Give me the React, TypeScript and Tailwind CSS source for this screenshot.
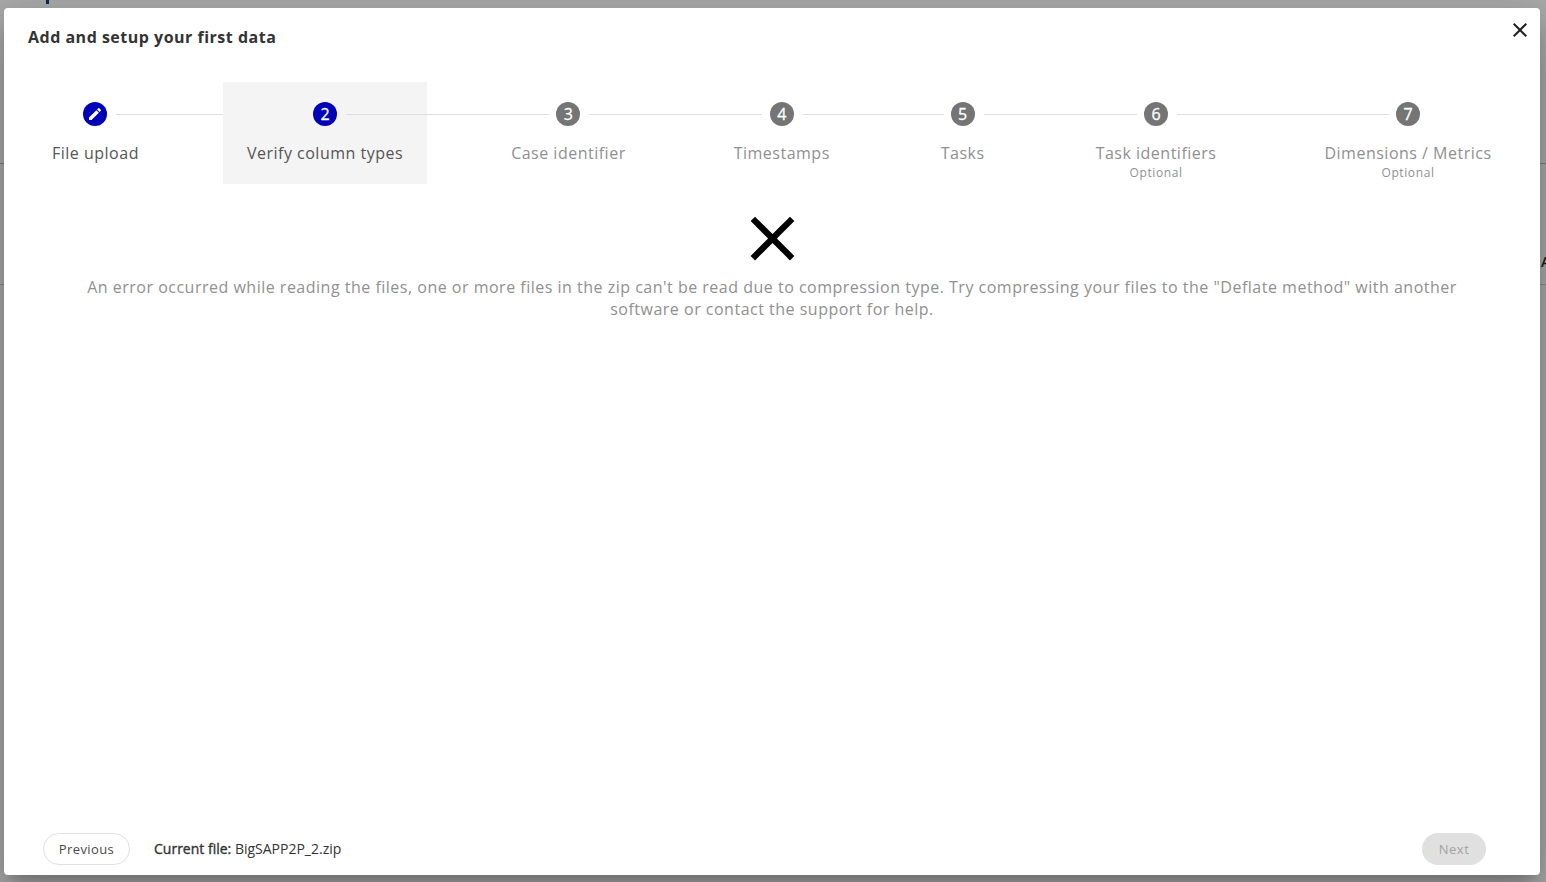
import React from 'react';

const steps = [
  { label: 'File upload', connector: 'w-[190px]', icon: 'edit', gap: '' },
  { label: 'Verify column types', connector: 'w-[203px]', num: 2, active: true, gap: 'ml-[60px]' },
  { label: 'Case identifier', connector: 'w-[173px]', num: 3, gap: 'ml-[60px]' },
  { label: 'Timestamps', connector: 'w-[141px]', num: 4, gap: 'ml-[60px]' },
  { label: 'Tasks', connector: 'w-[153px]', num: 5, gap: 'ml-[63px]' },
  { label: 'Task identifiers', connector: 'w-[212px]', num: 6, optional: true, gap: 'ml-[63px]' },
  { label: 'Dimensions / Metrics', num: 7, optional: true, gap: 'ml-[60px]' },
];

const CloseIcon: React.FC<{ className: string }> = ({ className }) => (
  <svg className={className} viewBox="0 0 24 24" fill="currentColor">
    <path d="M19 6.41L17.59 5 12 10.59 6.41 5 5 6.41 10.59 12 5 17.59 6.41 19 12 13.41 17.59 19 19 17.59 13.41 12z" />
  </svg>
);

const Step: React.FC<{ s: typeof steps[0] }> = ({ s }) => {
  const done = s.icon === 'edit';
  const current = done || s.active;
  return (
    <div className={`relative h-[102px] px-6 pt-5 flex flex-col items-center ${s.gap} ${s.active ? 'bg-[#f4f4f4]' : ''}`}>
      {/* Circle */}
      <div className={`relative z-10 w-6 h-6 rounded-full flex items-center justify-center text-white text-base [-webkit-text-stroke:0.3px_#ffffff] ${current ? 'bg-[#0000b8]' : 'bg-[#757575]'}`}>
        {done ? (
          <svg className="w-4 h-4" viewBox="0 0 24 24" fill="currentColor">
            <path d="M3 17.25V21h3.75L17.81 9.94l-3.75-3.75L3 17.25zM20.71 7.04c.39-.39.39-1.02 0-1.41l-2.34-2.34c-.39-.39-1.02-.39-1.41 0l-1.83 1.83 3.75 3.75 1.83-1.83z" />
          </svg>
        ) : (
          s.num
        )}
      </div>

      {/* Connector to next step */}
      {s.connector && (
        <div className={`absolute top-8 left-[calc(50%+21px)] h-px bg-[#dedede] ${s.connector}`} />
      )}

      <p className={`mt-[15px] text-base leading-[24px] tracking-[0.5px] whitespace-nowrap ${current ? 'text-[#555555]' : 'text-[#909090]'}`}>
        {s.label}
      </p>
      {s.optional && (
        <p className="text-xs leading-[16px] tracking-[0.6px] text-[#909090]">Optional</p>
      )}
    </div>
  );
};

export default function App() {
  return (
    <div className="relative h-[882px] w-full overflow-hidden bg-[#aaaaaa] pt-2 pl-1 pr-1.5 pb-[7px] font-['Open_Sans',sans-serif]">
      {/* Page behind the backdrop */}
      <div className="absolute left-[46px] top-0 w-[3px] h-1 bg-[#0a2a55]" />
      <div className="absolute left-0 right-0 top-[163px] h-px bg-[#7c7c7c]" />
      <div className="absolute left-0 right-0 top-[284px] h-px bg-[#8a8a8a]" />
      <span className="absolute left-[1541px] top-[252px] text-sm font-semibold text-[#1a1a1a]">A</span>

      <div className="relative h-full rounded bg-white flex flex-col shadow-[0_11px_15px_-7px_rgba(0,0,0,0.2),0_24px_38px_3px_rgba(0,0,0,0.14),0_9px_46px_8px_rgba(0,0,0,0.12)]">
        {/* Header */}
        <div className="flex items-start justify-between pl-6 pr-2 pt-[18px] h-[74px]">
          <h2 className="text-base leading-[22px] font-bold tracking-[0.5px] text-[#333333]">
            Add and setup your first data
          </h2>
          <CloseIcon className="w-6 h-6 -mt-[8px] text-[#1f1f1f]" />
        </div>

        {/* Stepper */}
        <div className="flex pl-6 pr-6">
          {steps.map((s) => (
            <Step key={s.label} s={s} />
          ))}
        </div>

        {/* Error */}
        <div className="flex flex-col items-center flex-1 px-20">
          <CloseIcon className="w-[75px] h-[75px] mt-[17px] text-black" />
          <p className="text-base leading-[22px] tracking-[0.5px] text-center text-[#909090]">
            An error occurred while reading the files, one or more files in the zip can't be read due to compression type. Try compressing your files to the "Deflate method" with another software or contact the support for help.
          </p>
        </div>

        {/* Footer */}
        <div className="flex items-center justify-between pl-[39px] pr-[54px] pb-2.5">
          <div className="flex items-center gap-6">
            <button className="h-8 w-[87px] pt-px rounded-full border border-[#e0e0e0] bg-white text-[13px] tracking-[0.4px] text-[#4a4a4a]">
              Previous
            </button>
            <p className="text-sm text-[#333333]">
              <span className="[-webkit-text-stroke:0.35px_#333333]">Current file:</span> BigSAPP2P_2.zip
            </p>
          </div>
          <button disabled className="h-8 w-16 pt-px rounded-full bg-[#e0e0e0] text-[13px] tracking-[0.5px] text-[#a3a3a3]">
            Next
          </button>
        </div>
      </div>
    </div>
  );
}
